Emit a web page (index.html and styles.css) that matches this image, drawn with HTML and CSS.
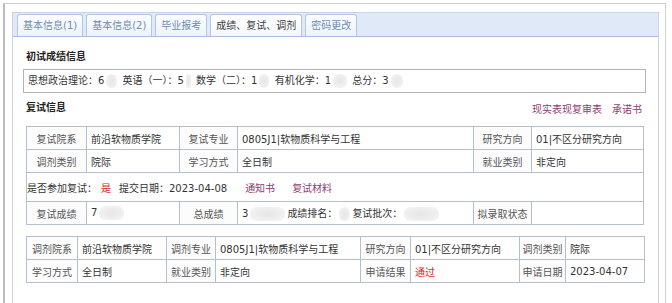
FILE: index.html
```html
<!DOCTYPE html>
<html lang="zh-CN">
<head>
  <meta charset="UTF-8">
  <title>成绩、复试、调剂</title>
  <link rel="stylesheet" href="styles.css">
</head>
<body>
<div class="frame">
  <div class="panel">
    <div class="tabbar">
      <span class="tab">基本信息(1)</span>
      <span class="tab">基本信息(2)</span>
      <span class="tab">毕业报考</span>
      <span class="tab active">成绩、复试、调剂</span>
      <span class="tab">密码更改</span>
    </div>

    <div class="content">
      <h3 class="sec-title first">初试成绩信息</h3>
      <div class="scorebox">
        思想政治理论：6<i class="blur b11"></i> 英语（一）：5<i class="blur b5"></i> 数学（二）：1<i class="blur b10"></i> 有机化学：1<i class="blur b14"></i> 总分：3<i class="blur b12"></i>
      </div>

      <div class="sec-head">
        <h3 class="sec-title">复试信息</h3>
        <div class="links">
          <a href="#">现实表现复审表</a>
          <a href="#">承诺书</a>
        </div>
      </div>

      <!-- 复试 -->
      <table class="grid retest">
        <colgroup>
          <col style="width:60px"><col style="width:93px"><col style="width:58px">
          <col style="width:236px"><col style="width:58px"><col style="width:112px">
        </colgroup>
        <tr>
          <td class="lbl">复试院系</td><td>前沿软物质学院</td>
          <td class="lbl">复试专业</td><td>0805J1|软物质科学与工程</td>
          <td class="lbl">研究方向</td><td>01|不区分研究方向</td>
        </tr>
        <tr>
          <td class="lbl">调剂类别</td><td>院际</td>
          <td class="lbl">学习方式</td><td>全日制</td>
          <td class="lbl">就业类别</td><td>非定向</td>
        </tr>
        <tr class="tall">
          <td colspan="6" class="line">
            是否参加复试：<span class="red yes">是</span><span class="gap8">提交日期：2023-04-08</span><a href="#" class="gap18">通知书</a><a href="#" class="gap17">复试材料</a>
          </td>
        </tr>
        <tr>
          <td class="lbl">复试成绩</td><td>7<i class="blur b25"></i></td>
          <td class="lbl">总成绩</td>
          <td>3<i class="blur b35"></i>成绩排名：<i class="blur b11"></i>复试批次：<i class="blur b35"></i></td>
          <td class="lbl">拟录取状态</td><td></td>
        </tr>
      </table>

      <!-- 调剂 -->
      <table class="grid adjust">
        <colgroup>
          <col style="width:51px"><col style="width:89px"><col style="width:49px"><col style="width:145px">
          <col style="width:50px"><col style="width:109px"><col style="width:46px"><col style="width:79px">
        </colgroup>
        <tr>
          <td class="lbl">调剂院系</td><td>前沿软物质学院</td>
          <td class="lbl">调剂专业</td><td>0805J1|软物质科学与工程</td>
          <td class="lbl">研究方向</td><td>01|不区分研究方向</td>
          <td class="lbl">调剂类别</td><td>院际</td>
        </tr>
        <tr>
          <td class="lbl">学习方式</td><td>全日制</td>
          <td class="lbl">就业类别</td><td>非定向</td>
          <td class="lbl">申请结果</td><td><span class="red">通过</span></td>
          <td class="lbl">申请日期</td><td>2023-04-07</td>
        </tr>
      </table>
    </div>
  </div>
</div>
</body>
</html>
```

FILE: styles.css
```css
html, body {
  margin: 0;
  background: #ffffff;
  font-family: "DejaVu Sans", "Noto Sans CJK SC", sans-serif;
  font-size: 10px;
  color: #333333;
}
.frame {
  margin: 3px 6px 0 3px;
  border-left: 2px solid #bdbdbd;
  border-top: 1px solid #cfcfcf;
  border-right: 1px solid #cfcfcf;
  padding: 8px 6px 0 7px;
  height: 291px;
  overflow: hidden;
}
.panel {
  border: 1px solid #c9d5e4;
  border-bottom: none;
  height: 290px;
}

/* tabs */
.tabbar {
  display: flex;
  align-items: flex-end;
  gap: 3px;
  height: 23px;
  padding-left: 4px;
  background: #dfe9f8;
  border-bottom: 1px solid #a9bdd8;
}
.tab {
  display: block;
  height: 21px;
  line-height: 21px;
  padding: 0 5px;
  margin-bottom: -1px;
  border: 1px solid #b3c7e2;
  border-bottom-color: #a9bdd8;
  border-radius: 3px 3px 0 0;
  background: linear-gradient(#fbfdff, #edf3fb);
  color: #6f8db3;
}
.tab.active {
  background: linear-gradient(#ffffff, #f3f7fd);
  color: #3c3c3c;
}

/* content */
.content {
  padding: 0 14px 0 12px;
}
.sec-title {
  margin: 0;
  font-size: 10px;
  font-weight: bold;
  line-height: 16px;
  color: #222222;
  padding-left: 1px;
}
.sec-title.first {
  margin-top: 12px;
}
.scorebox {
  margin: 4px -2px 0 -2px;
  height: 22px;
  line-height: 22px;
  border: 1px solid #b4b4b4;
  padding-left: 4px;
  white-space: nowrap;
}
.sec-head {
  display: flex;
  justify-content: space-between;
  align-items: center;
  margin-top: 7px;
  margin-bottom: 10px;
}
.links {
  display: flex;
  gap: 10px;
  padding-right: 2px;
}
a {
  color: #8e3d73;
  text-decoration: none;
}

/* tables */
.grid {
  border-collapse: collapse;
  table-layout: fixed;
  width: 618px;
  margin-left: 1px;
}
.grid td {
  border: 1px solid #b3bfcc;
  height: 22px;
  padding: 0 0 0 4px;
  white-space: nowrap;
  overflow: hidden;
  color: #333333;
}
.grid td.lbl {
  text-align: center;
  padding: 0;
  color: #555555;
  background: #fcfcfc;
}
.grid tr.tall td {
  height: 28px;
}
.grid td.line {
  padding-left: 0;
}
.adjust {
  margin-top: 11px;
}
.red {
  color: #e0241e;
}
.yes {
  margin-left: 4px;
}
.gap8 { margin-left: 8px; }
.gap18 { margin-left: 18px; }
.gap17 { margin-left: 17px; }

/* masked values */
.blur {
  display: inline-block;
  height: 14px;
  vertical-align: middle;
  border-radius: 6px;
  background: radial-gradient(ellipse at center, #e6e6e6 0%, #efefef 60%, #f8f8f8 100%);
  margin: 0 2px;
}
.b5 { width: 5px; }
.b10 { width: 10px; }
.b11 { width: 11px; }
.b12 { width: 12px; }
.b14 { width: 14px; }
.b25 { width: 25px; }
.b35 { width: 35px; }
```
